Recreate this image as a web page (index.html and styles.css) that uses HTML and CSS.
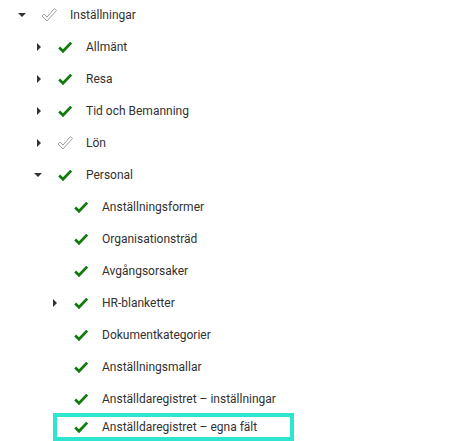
FILE: index.html
```html
<!DOCTYPE html>
<html lang="sv">
<head>
<meta charset="utf-8">
<title>Inställningar</title>
<link rel="stylesheet" href="styles.css">
</head>
<body>
<svg width="0" height="0" class="defs">
  <defs>
    <symbol id="ok" viewBox="0 0 16 16">
      <path d="M2.2 8.6 L6 12.2 L14.2 3.6" fill="none" stroke="#107c10" stroke-width="2.8" stroke-linejoin="miter"/>
    </symbol>
    <symbol id="partial" viewBox="0 0 16 16">
      <path d="M1 9 L3 7 L6 10 L13.5 1.5 L15.5 3.5 L6 14 Z" fill="none" stroke="#a19f9d" stroke-width="1" stroke-linejoin="round"/>
    </symbol>
  </defs>
</svg>
<ul class="tree">
  <li class="row lvl0"><span class="toggle down"></span><span class="content"><svg class="chk"><use href="#partial"/></svg><span class="label">Inställningar</span></span></li>
  <li class="row lvl1"><span class="toggle right"></span><span class="content"><svg class="chk"><use href="#ok"/></svg><span class="label">Allmänt</span></span></li>
  <li class="row lvl1"><span class="toggle right"></span><span class="content"><svg class="chk"><use href="#ok"/></svg><span class="label">Resa</span></span></li>
  <li class="row lvl1"><span class="toggle right"></span><span class="content"><svg class="chk"><use href="#ok"/></svg><span class="label">Tid och Bemanning</span></span></li>
  <li class="row lvl1"><span class="toggle right"></span><span class="content"><svg class="chk"><use href="#partial"/></svg><span class="label">Lön</span></span></li>
  <li class="row lvl1"><span class="toggle down"></span><span class="content"><svg class="chk"><use href="#ok"/></svg><span class="label">Personal</span></span></li>
  <li class="row lvl2"><span class="toggle"></span><span class="content"><svg class="chk"><use href="#ok"/></svg><span class="label">Anställningsformer</span></span></li>
  <li class="row lvl2"><span class="toggle"></span><span class="content"><svg class="chk"><use href="#ok"/></svg><span class="label">Organisationsträd</span></span></li>
  <li class="row lvl2"><span class="toggle"></span><span class="content"><svg class="chk"><use href="#ok"/></svg><span class="label">Avgångsorsaker</span></span></li>
  <li class="row lvl2"><span class="toggle right"></span><span class="content"><svg class="chk"><use href="#ok"/></svg><span class="label">HR-blanketter</span></span></li>
  <li class="row lvl2"><span class="toggle"></span><span class="content"><svg class="chk"><use href="#ok"/></svg><span class="label">Dokumentkategorier</span></span></li>
  <li class="row lvl2"><span class="toggle"></span><span class="content"><svg class="chk"><use href="#ok"/></svg><span class="label">Anställningsmallar</span></span></li>
  <li class="row lvl2"><span class="toggle"></span><span class="content"><svg class="chk"><use href="#ok"/></svg><span class="label">Anställdaregistret – inställningar</span></span></li>
  <li class="row lvl2 selected"><span class="toggle"></span><span class="content"><svg class="chk"><use href="#ok"/></svg><span class="label">Anställdaregistret – egna fält</span></span></li>
</ul>
</body>
</html>
```

FILE: styles.css
```css
html, body {
  margin: 0;
  padding: 0;
  background: #ffffff;
}

body {
  font-family: Roboto, "Liberation Sans", sans-serif;
  font-size: 12px;
  color: #323130;
  overflow: hidden;
}

.defs {
  position: absolute;
  width: 0;
  height: 0;
}

.tree {
  list-style: none;
  margin: -1px 0 0 0;
  padding: 0;
}

.row {
  display: flex;
  align-items: center;
  height: 32px;
  box-sizing: border-box;
}

.lvl0 { padding-left: 14px; }
.lvl1 { padding-left: 30px; }
.lvl2 { padding-left: 46px; }

.toggle {
  width: 16px;
  height: 16px;
  display: flex;
  align-items: center;
  justify-content: center;
  flex: none;
}

.toggle.right::before {
  content: "";
  width: 0;
  height: 0;
  border-top: 4px solid transparent;
  border-bottom: 4px solid transparent;
  border-left: 4px solid #333;
  margin-left: 1px;
}

.toggle.down::before {
  content: "";
  width: 0;
  height: 0;
  border-left: 4px solid transparent;
  border-right: 4px solid transparent;
  border-top: 4px solid #333;
}

.content {
  display: flex;
  align-items: center;
  padding-left: 11px;
  height: 28px;
  box-sizing: border-box;
}

.chk {
  width: 16px;
  height: 16px;
  flex: none;
}

.label {
  margin-left: 13px;
  white-space: nowrap;
}

.selected .content {
  border: 4px solid #2ee6d0;
  margin-left: -9px;
  padding-left: 16px;
  width: 241px;
  align-self: flex-start;
  margin-top: -2px;
  height: 28px;
}
```
